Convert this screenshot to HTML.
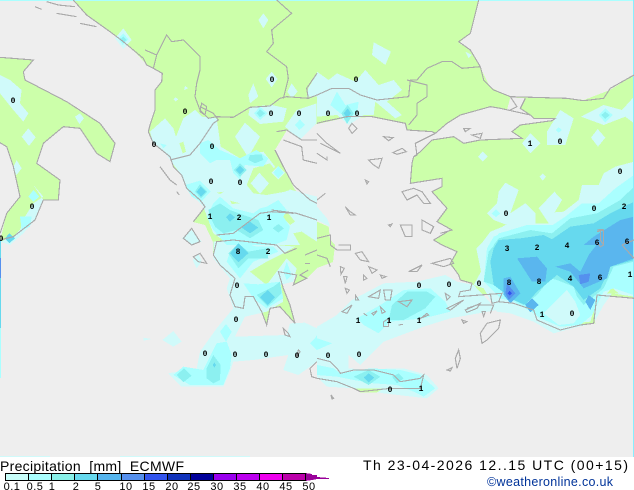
<!DOCTYPE html>
<html><head><meta charset="utf-8"><style>
html,body{margin:0;padding:0;background:#fff;width:634px;height:490px;overflow:hidden}
svg{display:block}
.z3{transform:scale(.33333)}
.z4{transform:translate(317px,0) scale(.33333)}
.z5{transform:translate(0,225px) scale(.33333)}
.z6{transform:translate(317px,225px) scale(.33333)}
.c{fill:none;stroke:#aaa;stroke-width:3.4}
.n{font:bold 8px "Liberation Mono",monospace;text-anchor:middle;fill:#000}
.t{font-family:"Liberation Sans",sans-serif;fill:#000}
.b{font:11px "Liberation Sans",sans-serif;text-anchor:middle;fill:#000;letter-spacing:.5px}
</style></head><body>
<svg width="634" height="490" viewBox="0 0 634 490" xmlns="http://www.w3.org/2000/svg">
<rect width="634" height="490" fill="#fff"/>
<g shape-rendering="crispEdges">
<rect width="634" height="457" fill="#eee"/>
<g fill="#ccffaa">
<polygon points="73,0 87,15 110,32 133,50 147,65 162,73 162,82 155,90 155,110 150,125 148,132 153,143 170,157 173,167 182,175 187,188 200,200 205,207 200,213 193,222 205,225 213,242 213,255 220,265 235,278 230,295 235,307 243,308 245,297 253,297 262,312 267,325 270,308 280,307 295,323 290,305 283,288 278,272 297,275 293,285 307,278 317,268 333,262 335,245 318,225 312,205 295,190 283,165 275,150 287,130 317,124 345,118 372,117 405,123 407,130 432,132 435,133 412,160 410,183 442,178 442,187 432,192 447,208 437,222 452,230 434,240 442,245 457,252 450,265 459,275 460,280 472,283 470,290 460,292 459,297 502,293 499,302 514,303 534,310 537,320 560,330 580,325 594,322 597,295 634,298 634,75 610,90 584,100 567,98 510,97 490,87 480,67 470,50 459,43 470,33 479,0"/>
<polygon class="z3" points="0,172 100,180 70,215 75,240 200,305 300,370 345,430 330,485 290,460 240,385 190,380 130,430 110,490 180,540 175,600 130,600 105,660 40,710 0,725 20,640 60,590 40,500 20,440 0,428"/>
</g>
<g fill="#eee">
<polygon class="z4" points="355,400 390,370 430,345 520,320 550,325 640,345 650,355 715,355 705,362 610,375 585,395 615,415 490,420 440,430 410,410 345,420 310,455 290,470 295,430"/>
<polygon class="z4" points="580,292 625,295 610,325 640,345 570,330"/>
</g>
<!-- L0 -->
<g fill="#d0fafa">
<path class="z3" d="M790,40L805,60L790,85L775,60ZM370,85L395,120L370,147L345,115ZM0,225L30,240L65,270L60,310L85,340L70,365L40,330L0,280ZM85,385L107,412L87,438L65,410ZM240,340L252,355L238,372L225,350ZM815,215L833,237L815,262L797,237ZM760,250L775,290L750,310L745,285ZM875,250L893,275L875,295L862,275ZM951,220L925,265L920,290L951,290ZM555,258L565,265L552,270ZM527,292L535,298L527,304L520,298ZM100,555L130,590L100,610L75,650L60,690L40,710L0,725L30,735L70,700L105,660L130,600ZM50,480L65,505L50,525L38,505ZM450,395L495,355L520,385L528,410L550,355L585,330L605,350L650,355L662,440L720,475L740,465L705,410L735,368L780,410L750,462L790,455L810,480L825,500L815,520L855,560L875,570L951,590L951,735L690,735L640,700L610,620L560,570L540,520L500,465L460,430ZM950,310L890,330L855,380L900,420L950,370ZM750,320L815,315L860,325L850,365L780,372L745,345Z"/>
<path class="z4" d="M170,127L222,155L205,195L165,165ZM445,155L465,165L455,175ZM497,455L512,470L497,485L483,470ZM677,520L687,530L677,542L668,530ZM640,400L670,430L640,460L615,430ZM730,330L770,355L745,435L690,435L690,395ZM842,387L865,413L843,440L822,413ZM860,315L915,330L951,290L951,370L925,350L860,375L792,350ZM0,215L35,240L60,220L115,245L145,210L185,255L230,240L255,270L210,305L255,345L235,355L175,305L170,345L140,345L95,375L60,345L0,350ZM540,610L545,575L565,548L605,570L580,640L625,610L655,640L655,670L695,670L665,625L712,575L735,600L713,637L740,635L785,600L795,555L845,555L860,520L895,500L951,485L951,735L490,735L520,695L570,675L530,660L510,640ZM0,620L30,655L40,680L0,660Z"/>
<path class="z5" d="M640,50L690,45L710,30L830,60L885,65L850,85L800,110L750,140L800,180L830,140L860,100L890,130L880,170L840,180L850,230L800,260L735,275L705,335L860,330L870,295L915,293L951,310L951,410L895,450L850,435L865,390L760,405L700,410L690,440L670,485L545,485L505,445L590,430L600,380L650,310L700,250L680,190L690,160L640,100ZM430,338L455,342L430,347ZM487,345L520,318L545,350L520,365ZM595,85L605,110L590,130L578,105ZM545,40L575,15L605,50L580,60Z"/>
<path class="z6" d="M470,180L492,140L478,70L530,20L565,0L951,0L951,215L885,205L860,240L830,295L785,305L710,325L650,290L580,265L540,260L500,190ZM0,305L60,270L105,225L200,175L300,170L385,150L420,170L470,180L540,255L400,280L320,305L200,350L130,420L95,390L95,430L130,433L260,430L330,450L365,490L330,520L200,505L115,490L30,485L0,455Z"/>
</g>
<!-- green holes -->
<g fill="#ccffaa">
<polygon class="z3" points="740,555 760,505 810,490 850,540 870,570 855,575 800,585 760,580"/>
<polygon class="z3" points="538,430 550,425 558,455 548,460"/>
<polygon class="z3" points="650,578 672,575 660,582"/>
<polygon class="z3" points="690,602 720,610 695,612"/>
<polygon class="z3" points="880,700 905,695 951,725 951,735 900,735"/>
<polygon class="z3" points="840,645 865,640 885,665 870,675"/>
<polygon class="z4" points="0,665 35,680 40,730 0,700"/>
<polygon class="z6" points="735,305 732,265 770,295 820,290 830,258 835,295 790,300"/>
<polygon class="z6" points="115,490 200,490 180,502 130,502"/>
<polygon class="z6" points="870,205 885,188 905,205"/>
</g>
<g fill="#d0fafa">
<path class="z3" d="M752,550L778,518L807,550L780,582ZM835,498L855,518L835,538L815,518Z"/>
</g>
<!-- L1 -->
<g fill="#aaffff">
<path class="z3" d="M370,100L385,118L368,135L355,115ZM600,430L625,420L660,450L720,475L770,450L805,475L790,500L735,495L720,540L700,520L690,480L650,480L630,490L600,460ZM600,542L632,575L603,605L575,590L555,555ZM640,610L660,590L700,625L760,640L780,625L800,620L835,600L860,630L850,650L870,680L860,720L820,735L680,735L640,690L620,650ZM780,320L803,340L780,360L762,340ZM900,358L915,375L898,390L885,375ZM100,570L118,590L100,605L85,590ZM60,650L95,650L90,680L65,690ZM835,498L850,518L835,535L820,518ZM480,430L500,435L490,445Z"/>
<path class="z4" d="M725,382L735,390L725,398L716,390ZM865,325L887,345L865,368L845,345ZM60,275L85,315L125,305L120,340L95,355L70,340L40,315ZM537,628L550,640L537,652L524,640Z"/>
<path class="z5" d="M660,320L678,297L695,320L678,350ZM650,355L680,350L695,390L690,430L670,480L570,480L520,450L550,425L610,435ZM730,175L775,178L840,170L850,220L800,250L760,220ZM690,80L720,50L770,65L820,65L835,80L760,110L720,160L680,110ZM860,110L875,150L860,165L850,140ZM945,340L951,330L951,375L930,355Z"/>
<path class="z4" d="M951,525L895,565L845,610L795,610L745,650L700,680L620,680L545,700L525,735L951,735Z"/>
<path class="z6" d="M500,170L510,70L530,35L580,15L630,0L951,0L951,210L890,190L860,200L825,270L790,300L730,305L670,280L650,265L590,230L550,220ZM120,280L190,240L260,195L340,190L385,230L400,260L320,280L220,290L185,325L140,300ZM0,420L50,430L70,445L160,430L250,435L310,450L355,490L320,515L290,500L240,480L170,475L110,465L60,455L0,450ZM0,340L45,355L0,375Z"/>
</g>
<g fill="#d0fafa"><path class="z6" d="M725,220L750,195L775,230L790,270L770,295L725,300L680,265Z"/></g>
<!-- L2 -->
<g fill="#8cf0f0">
<path class="z3" d="M370,110L380,120L368,128L360,118ZM750,465L785,463L790,480L765,490L745,480ZM720,490L740,510L720,530L702,510ZM600,552L622,575L603,595L585,575ZM660,610L690,630L730,645L775,660L790,690L750,715L710,690L670,700L645,680L630,650L625,630ZM780,328L795,340L780,352L770,340ZM835,672L852,685L835,698L818,685Z"/>
<path class="z4" d="M92,315L110,340L90,372L73,340ZM865,335L878,345L865,357L853,345ZM951,560L910,600L840,640L760,655L705,700L640,690L545,715L530,735L951,735Z"/>
<path class="z5" d="M620,430L640,390L662,420L660,465L640,475L620,460ZM552,430L575,452L550,472L530,450ZM770,210L820,185L840,170L845,205L803,245ZM685,85L715,55L745,80L800,70L805,100L745,100L715,130Z"/>
<path class="z6" d="M515,80L545,45L610,30L650,25L690,25L745,40L815,25L870,20L900,0L951,0L951,110L890,125L860,190L800,240L780,215L770,185L720,165L700,160L660,210L620,240L590,225L530,180L500,170ZM215,285L225,240L270,200L330,200L355,215L325,250L260,285ZM110,455L155,435L190,455L155,480ZM225,455L245,445L260,460L240,475Z"/>
</g>
<!-- L3 -->
<g fill="#66d9ee">
<path class="z3" d="M720,497L732,510L720,523L708,510ZM602,560L618,575L603,590L590,575ZM690,640L705,652L690,665L678,652ZM750,665L775,683L750,700L725,683ZM28,700L45,715L28,730L15,715Z"/>
<path class="z4" d="M92,325L102,340L90,355L80,340ZM951,605L880,640L830,670L760,680L680,735L951,735Z"/>
<path class="z5" d="M643,412L648,420L643,428L638,420ZM803,195L825,217L803,240L780,217ZM715,55L745,85L715,112L690,85Z"/>
<path class="z6" d="M520,110L530,70L545,45L610,40L680,30L720,50L815,25L900,0L951,0L951,105L880,125L850,190L800,225L770,185L720,150L660,200L625,240L590,225L530,180ZM155,445L172,458L155,472L140,458Z"/>
</g>
<!-- L4 -->
<g fill="#5ab6ee">
<path class="z4" d="M951,650L910,660L830,710L800,735L951,735Z"/>
<path class="z6" d="M600,100L660,95L690,130L685,170L645,170ZM715,125L760,115L790,140L815,90L850,45L900,10L951,0L951,100L880,125L870,160L800,190L760,140ZM560,160L580,155L610,205L580,235L560,210ZM645,220L665,240L640,262L625,240ZM815,210L835,225L820,255L805,230Z"/>
</g>
<g fill="#5590ee"><path class="z6" d="M570,175L595,205L575,225L565,205ZM785,150L820,145L815,170L790,178Z"/></g>
<g fill="#3355ee"><path class="z6" d="M578,197L585,205L578,212L572,205Z"/></g>
<!-- edges -->
<rect x="0" y="0" width="634" height="1" fill="#aaffff"/>
<rect x="633" y="0" width="1" height="457" fill="#88eeff"/>
<rect x="0" y="240" width="1" height="30" fill="#66d9ee"/>
<rect x="0" y="258" width="1" height="20" fill="#5590ee"/>
<rect x="0" y="278" width="1" height="50" fill="#66d9ee"/>
<rect x="0" y="328" width="1" height="50" fill="#aaffff"/>
<rect x="0" y="456" width="50" height="1" fill="#d0fafa"/>
<rect x="120" y="456" width="130" height="1" fill="#d0fafa"/>
</g>
<!-- coasts -->
<g shape-rendering="crispEdges">
<path class="c z3" d="M220,0L260,45L330,95L370,125L400,150L430,175L440,195L460,205L487,220L485,245L465,270L465,330L450,375L445,395L460,430L510,470L520,500L545,525L560,565L600,600L615,620L600,640L580,665M140,5L175,15L225,20M170,40L230,50M240,70L290,80M105,20L125,28M435,150L470,165L460,205M470,165L500,105L515,125L550,120L600,170L600,210L590,250L585,290L600,330L625,355L650,350L700,352L750,322L810,318L840,295L860,290L925,295L951,285M605,310L620,320L615,345L600,335ZM600,320L640,340L655,360L640,370L600,430L570,465L510,480M830,0L875,40L815,90L820,130L800,155L860,200L865,235L850,295M951,220L920,265L925,295M0,172L100,180L70,215L75,240L200,305L300,370L345,430L330,485L290,460L240,385L190,380L130,430L110,490L180,540L175,600L130,600L105,660L40,710L0,720M0,428L20,440L40,500L60,590L20,640L0,700M830,395L860,390L905,420L951,420M825,450L850,500L880,555L930,600L951,610M850,420L905,440L910,480L951,490M815,630L890,640L951,660M650,705L700,700L780,640L815,635L880,640M480,500L510,540L530,555M530,575L538,585"/>
<path class="c z4" d="M0,285L45,265L95,265L130,285L180,300L275,290L280,240L300,240L330,205L375,185L405,185L435,205L490,200M270,240L330,255L330,290L300,310L300,345L275,375M485,0L460,100L425,125L460,150L490,200L500,240L530,270L580,290L750,295L800,302L860,295L880,265L951,225M580,290L600,320L580,330M625,295L610,325L640,345M0,370L20,365L90,350L165,350L265,370L270,390L345,395L355,400L390,370L430,345L520,320L550,325L640,345L650,355L715,355L705,362L610,375L585,395L615,415L490,420L440,430L410,410L345,420L310,455L290,470L285,490L280,550L375,535L375,560L345,575L390,625L360,665L405,690L370,700M355,400L295,430L300,465L290,470M105,370L120,385L105,400L95,385ZM200,410L228,413L215,422ZM228,458L255,445L268,455L240,463ZM155,480L195,475L185,505L170,495ZM255,575L290,565L315,575L340,610L320,610L300,585L270,600ZM250,675L285,675L285,710L265,710ZM315,660L350,680L340,700L315,690ZM440,385L460,385L445,395ZM465,405L495,400L490,415ZM0,400L20,420L30,430L70,460L30,440L10,430M0,460L30,480L30,470M145,540L155,545L150,552ZM85,620L100,635L115,645L100,645ZM0,600L25,580M215,675L225,672L220,680ZM850,690L850,720L860,735M840,690L860,688"/>
<path class="c z5" d="M640,90L660,120L705,160L690,210L705,245L730,250L735,215L760,215L785,260L800,300L810,250L840,245L885,295L870,240L850,190L835,140L890,150L880,180L920,160L900,150L925,135M640,90L650,50L700,45L830,60L855,85L890,70M580,95L600,85L620,115L595,110ZM550,40L575,10L600,50L575,60ZM850,310L865,325L870,335L855,330ZM895,375L900,380L890,395ZM951,410L930,430L935,455L951,460M915,90L951,75M915,115L930,115"/>
<path class="c z6" d="M400,15L350,45L375,60L420,80L400,115L425,150L430,165L465,175L460,195L430,200L425,215L555,205L545,230L590,235L650,255L660,285L730,315L790,300L830,295L840,210L951,220M520,205L525,235L545,230M450,250L480,240L530,240L520,265M840,20L860,15L860,60L850,65L840,50M915,60L951,100M915,60L951,45M490,325L510,295L550,285L545,310L510,345L495,355ZM425,375L430,400L420,430L415,400ZM390,435L405,428L400,438ZM0,460L60,470L110,490L130,500L220,490L310,490L320,450L310,460L250,470L230,450L170,435L110,435L70,445L60,430L40,410L0,400M115,85L135,80L155,110L130,105ZM70,125L82,130L72,148ZM80,155L90,155L85,175ZM140,150L150,160L140,165ZM155,125L180,135L165,145ZM190,150L207,155L195,160ZM85,190L97,195L90,205ZM115,210L125,225L115,225ZM155,215L190,195L185,220ZM200,195L225,195L220,225L205,225ZM75,260L105,240L90,265ZM140,265L150,272M165,265L180,258L170,270ZM190,245L205,260L195,265ZM245,230L285,225L270,245ZM200,290L215,280L215,305L200,305ZM305,285L330,265L335,270L310,280ZM245,300L258,298M385,205L400,215L390,225ZM390,250L440,225L420,240L400,255ZM445,255L490,235L480,250L450,262ZM495,260L505,260L500,275ZM275,140L315,120L300,140ZM345,115L400,100L410,115L380,125ZM435,285L450,290L440,295ZM42,510L50,520L45,522ZM0,40L40,30L40,60L60,75L100,75L100,60L65,60M0,90L30,100L40,125"/>
</g>
<!-- value labels -->
<g class="n">
<text x="13" y="103">0</text><text x="185" y="114">0</text><text x="154" y="147">0</text><text x="212" y="149">0</text><text x="272" y="82">0</text><text x="271" y="116">0</text><text x="299" y="116">0</text><text x="211" y="184">0</text><text x="240" y="185">0</text><text x="32" y="209">0</text><text x="210" y="219">1</text><text x="239" y="220">2</text><text x="269" y="220">1</text><text x="1" y="241">0</text>
<text x="356" y="82">0</text><text x="328" y="116">0</text><text x="357" y="116">0</text><text x="530" y="146">1</text><text x="560" y="144">0</text><text x="620" y="174">0</text><text x="594" y="211">0</text><text x="624" y="209">2</text><text x="506" y="216">0</text>
<text x="507" y="251">3</text><text x="537" y="250">2</text><text x="567" y="248">4</text><text x="597" y="245">6</text><text x="627" y="244">6</text><text x="509" y="285">8</text><text x="539" y="284">8</text><text x="570" y="281">4</text><text x="600" y="280">6</text><text x="630" y="277">1</text><text x="542" y="317">1</text><text x="572" y="316">0</text><text x="419" y="288">0</text><text x="449" y="287">0</text><text x="479" y="286">0</text><text x="358" y="323">1</text><text x="389" y="323">1</text><text x="419" y="323">1</text><text x="328" y="358">0</text><text x="359" y="357">0</text><text x="390" y="392">0</text><text x="421" y="391">1</text>
<text x="238" y="254">8</text><text x="268" y="254">2</text><text x="237" y="288">0</text><text x="236" y="322">0</text><text x="205" y="356">0</text><text x="235" y="357">0</text><text x="266" y="357">0</text><text x="297" y="358">0</text>
</g>
<!-- colorbar -->
<g shape-rendering="crispEdges">
<rect x="5" y="473" width="23" height="7" fill="#c8fefa"/>
<rect x="28" y="473" width="23" height="7" fill="#aaffff"/>
<rect x="51" y="473" width="23" height="7" fill="#88f0e8"/>
<rect x="74" y="473" width="23" height="7" fill="#66d9ee"/>
<rect x="97" y="473" width="24" height="7" fill="#55b5ee"/>
<rect x="121" y="473" width="23" height="7" fill="#5590ee"/>
<rect x="144" y="473" width="23" height="7" fill="#3355ee"/>
<rect x="167" y="473" width="23" height="7" fill="#1133bb"/>
<rect x="190" y="473" width="23" height="7" fill="#000099"/>
<rect x="213" y="473" width="23" height="7" fill="#9900ee"/>
<rect x="236" y="473" width="23" height="7" fill="#bb00ee"/>
<rect x="259" y="473" width="23" height="7" fill="#ee00ee"/>
<rect x="282" y="473" width="23" height="7" fill="#bb00aa"/>
<polygon points="305,473 312,474 312,475 317,475 317,477 329,478 329,479 317,479 312,480 305,481" fill="#990099"/>
<path d="M5.5,473.5H305.5V480.5H5.5ZM28.5,473V480M51.5,473V480M74.5,473V480M97.5,473V480M121.5,473V480M144.5,473V480M167.5,473V480M190.5,473V480M213.5,473V480M236.5,473V480M259.5,473V480M282.5,473V480" fill="none" stroke="#000"/>
</g>
<g class="b">
<text x="12" y="490">0.1</text><text x="35" y="490">0.5</text><text x="52" y="490">1</text><text x="76" y="490">2</text><text x="98" y="490">5</text><text x="126" y="490">10</text><text x="149" y="490">15</text><text x="172" y="490">20</text><text x="194" y="490">25</text><text x="217" y="490">30</text><text x="240" y="490">35</text><text x="263" y="490">40</text><text x="286" y="490">45</text><text x="309" y="490">50</text>
</g>
<text class="t" x="0" y="471" font-size="14" textLength="184" lengthAdjust="spacing" xml:space="preserve">Precipitation  [mm]  ECMWF</text>
<text class="t" x="363" y="470" font-size="14" textLength="265" lengthAdjust="spacing" xml:space="preserve">Th 23-04-2026 12..15 UTC (00+15)</text>
<text x="487" y="486" font-family="Liberation Sans,sans-serif" font-size="12.5" fill="#003399" textLength="126" lengthAdjust="spacing">©weatheronline.co.uk</text>
</svg>
</body></html>
